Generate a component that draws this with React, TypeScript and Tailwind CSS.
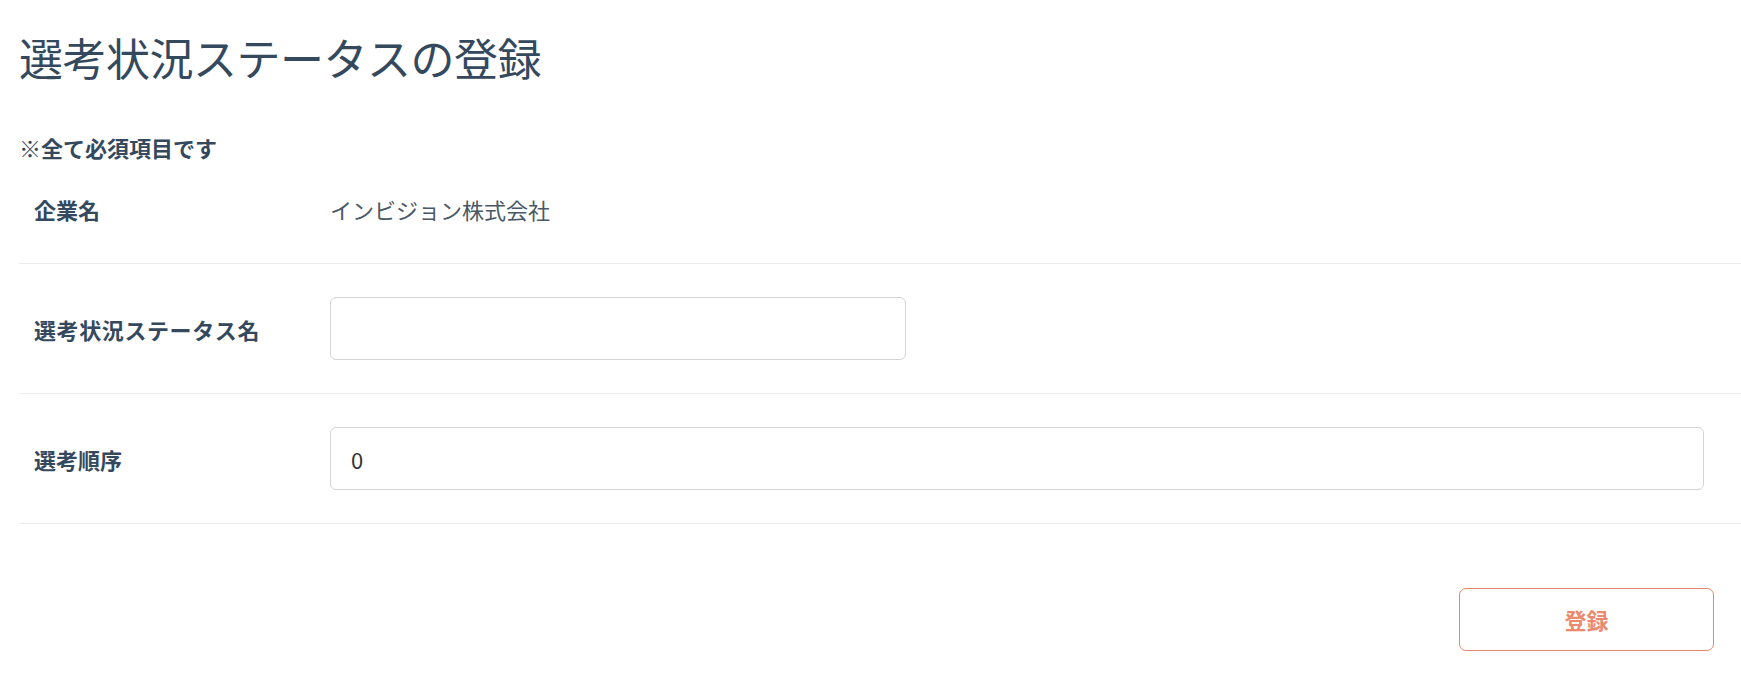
import React from 'react';

const font = { fontFamily: '"Noto Sans CJK JP", "Noto Sans", sans-serif' };

const App: React.FC = () => {
  return (
    <div className="min-h-screen bg-white text-[#34495e]" style={font}>
      <div className="pl-[19px]">
        <h1 className="pt-[31px] text-[44px] leading-[52px] font-normal tracking-[-0.5px]">
          選考状況ステータスの登録
        </h1>

        <p className="mt-[49px] text-[22px] leading-[30px] font-bold">※全て必須項目です</p>

        <div className="flex flex-col">
          <div className="flex items-center border-b border-[#ececec] pt-[30px] pb-[37px]">
            <div className="w-[311px] pl-[15px] text-[22px] leading-[34px] font-bold">企業名</div>
            <div className="text-[22px] leading-[34px] text-[#4a5866]">インビジョン株式会社</div>
          </div>

          <div className="flex items-center border-b border-[#ececec] py-[33px]">
            <div className="w-[311px] pl-[15px] text-[22px] leading-[34px] font-bold tracking-[0.6px]">
              選考状況ステータス名
            </div>
            <input
              type="text"
              className="h-[63px] w-[576px] rounded-[6px] border border-[#d4d4d4] px-[20px] text-[22px] text-[#333] outline-none"
            />
          </div>

          <div className="flex items-center border-b border-[#ececec] py-[33px]">
            <div className="w-[311px] pl-[15px] text-[22px] leading-[34px] font-bold">選考順序</div>
            <div className="flex-1 pr-[37px]">
              <input
                type="text"
                defaultValue="0"
                className="h-[63px] w-full rounded-[6px] border border-[#d4d4d4] px-[20px] text-[22px] text-[#333] outline-none"
              />
            </div>
          </div>
        </div>

        <div className="flex justify-end pr-[27px] pt-[64px] pb-[25px]">
          <button className="h-[63px] w-[255px] rounded-[7px] border border-[#e8866d] bg-white text-[22px] font-bold text-[#ec8a70]">
            登録
          </button>
        </div>
      </div>
    </div>
  );
};

export default App;
